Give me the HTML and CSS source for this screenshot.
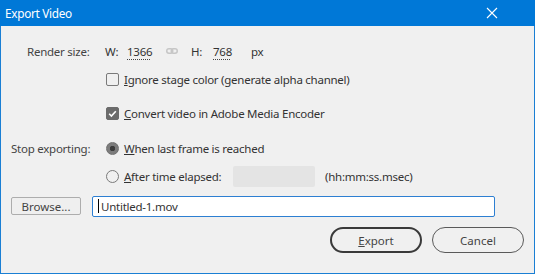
FILE: index.html
```html
<!DOCTYPE html>
<html lang="en">
<head>
    <meta charset="UTF-8">
    <title>Export Video</title>
    <link rel="stylesheet" href="styles.css">
</head>
<body>
    <div class="dialog">
        <div class="titlebar">
            <span class="title">Export Video</span>
            <svg class="close" width="12" height="12" viewBox="0 0 12 12">
                <path d="M1 1 L11 11 M11 1 L1 11" stroke="#fff" stroke-width="1.1" fill="none"/>
            </svg>
        </div>

        <div class="content">
            <!-- render size -->
            <div class="row row-size">
                <span class="label label-indent">Render size:</span>
                <div class="dims">
                    <span class="dim-key">W:</span>
                    <span class="num num-w">1366</span>
                    <span class="link">
                        <svg width="12" height="6" viewBox="0 0 12 6">
                            <rect x="0.75" y="0.75" width="6" height="4.5" rx="2.2" fill="none" stroke="#c6c6c6" stroke-width="1.5"/>
                            <rect x="5.25" y="0.75" width="6" height="4.5" rx="2.2" fill="none" stroke="#c6c6c6" stroke-width="1.5"/>
                        </svg>
                    </span>
                    <span class="dim-key">H:</span>
                    <span class="num num-h">768</span>
                    <span class="unit">px</span>
                </div>
            </div>

            <div class="row row-check1">
                <span class="label"></span>
                <span class="checkbox"></span>
                <span class="opt"><u>I</u>gnore stage color (generate alpha channel)</span>
            </div>

            <div class="row row-check2">
                <span class="label"></span>
                <span class="checkbox checked">
                    <svg width="13" height="13" viewBox="0 0 13 13">
                        <path d="M3.2 6.8 L5.4 9 L9.8 4.2" stroke="#fff" stroke-width="1.6" fill="none"/>
                    </svg>
                </span>
                <span class="opt"><u>C</u>onvert video in Adobe Media Encoder</span>
            </div>

            <!-- stop exporting -->
            <div class="row row-radio1">
                <span class="label">Stop exporting:</span>
                <span class="radio selected"></span>
                <span class="opt"><u>W</u>hen last frame is reached</span>
            </div>

            <div class="row row-radio2">
                <span class="label"></span>
                <span class="radio"></span>
                <span class="opt opt-time"><u>A</u>fter time elapsed:</span>
                <span class="time-box"></span>
                <span class="hint">(hh:mm:ss.msec)</span>
            </div>

            <!-- file -->
            <div class="row row-file">
                <button class="browse">Browse...</button>
                <div class="file-input"><span class="caret"></span>Untitled-1.mov</div>
            </div>

            <div class="actions">
                <button class="pill pill-default"><u>E</u>xport</button>
                <button class="pill">Cancel</button>
            </div>
        </div>
    </div>
</body>
</html>
```

FILE: styles.css
```css
* {
    margin: 0;
    padding: 0;
    box-sizing: border-box;
}
body {
    width: 535px;
    height: 274px;
    overflow: hidden;
    font-family: "Noto Sans", "Open Sans", sans-serif;
    font-size: 11.5px;
    letter-spacing: -0.25px;
    color: #333;
}
.dialog {
    width: 535px;
    height: 274px;
    background: #f0f0f0;
    border: 1px solid #1a7fd4;
    border-top: none;
}
/* title bar */
.titlebar {
    height: 26px;
    margin: 0 -1px;
    background: #0078d7;
    display: flex;
    align-items: center;
    justify-content: space-between;
    padding: 0 37px 0 5px;
}
.title {
    color: #fff;
    font-size: 11.8px;
    letter-spacing: -0.3px;
}
.close {
    display: block;
}
/* body */
.content {
    padding: 0 10px;
}
.row {
    display: flex;
    align-items: center;
    height: 20px;
}
.label {
    width: 95px;
    flex-shrink: 0;
    color: #444;
}
.label-indent {
    padding-left: 16px;
}
.row-size {
    margin-top: 15px;
}
.row-check1 {
    margin-top: 8px;
}
.row-check2 {
    margin-top: 14px;
}
.row-radio1 {
    margin-top: 15px;
}
.row-radio2 {
    margin-top: 8px;
}
.row-file {
    margin-top: 10px;
}
/* render size */
.dims {
    display: flex;
    align-items: center;
    margin-left: -1px;
}
.dim-key {
    width: 22px;
}
.num {
    border-bottom: 1px dotted #444;
    line-height: 14px;
    margin-top: 2px;
}
.num-w {
    width: 23px;
}
.num-h {
    width: 17px;
}
.link {
    width: 41px;
    display: flex;
    justify-content: center;
    padding-left: 3px;
}
.link svg {
    display: block;
}
.unit {
    margin-left: 21px;
}
/* checkboxes / radios */
.checkbox {
    width: 13px;
    height: 13px;
    border: 1px solid #7a7a7a;
    border-radius: 2px;
    flex-shrink: 0;
}
.checkbox.checked {
    background: #6b6b6b;
    border-color: #6b6b6b;
}
.checkbox svg {
    display: block;
    margin: -1px;
}
.radio {
    width: 13px;
    height: 13px;
    border: 1px solid #7a7a7a;
    border-radius: 50%;
    flex-shrink: 0;
}
.radio.selected {
    background: radial-gradient(circle, #3d3d3d 0 2.5px, #7c7c7c 3px);
    border-color: #6f6f6f;
}
.opt {
    margin-left: 5px;
}
.opt-time {
    width: 109px;
}
.time-box {
    width: 82px;
    height: 21px;
    background: #e4e4e4;
    border-radius: 2px;
}
.hint {
    margin-left: 10px;
}
/* file row */
.browse {
    width: 70px;
    height: 18px;
    border: 1px solid #adadad;
    border-radius: 2px;
    background: #efefef;
    font: inherit;
    color: #444;
}
.file-input {
    margin-left: 11px;
    width: 403px;
    height: 21px;
    border: 1px solid #2d7fd2;
    border-radius: 2px;
    background: #fff;
    display: flex;
    align-items: center;
    padding-left: 5px;
    color: #333;
}
.caret {
    width: 1px;
    height: 14px;
    background: #000;
    margin-right: 2px;
}
/* buttons */
.actions {
    display: flex;
    justify-content: flex-end;
    gap: 10px;
    margin-top: 11px;
}
.pill {
    width: 92px;
    height: 26px;
    border: 1px solid #5a5a5a;
    border-radius: 13px;
    background: transparent;
    font: inherit;
    color: #444;
}
.pill-default {
    border: 2px solid #3a3a3a;
}
```
